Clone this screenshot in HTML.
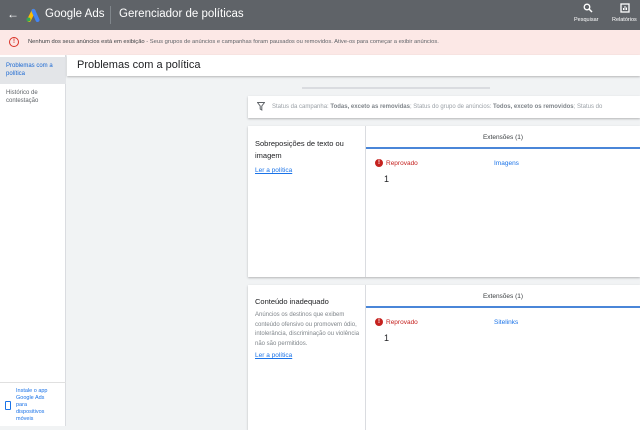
<!DOCTYPE html><html><head><meta charset="utf-8"><style>
*{box-sizing:border-box;margin:0;padding:0}
body{width:640px;height:426px;overflow:hidden;background:#f1f3f4;font-family:"Liberation Sans",sans-serif;position:relative;color:#202124}
.abs{position:absolute}
.hdr{left:0;top:0;width:640px;height:30px;background:#5f6368;color:#fff}
.alert{left:0;top:30px;width:640px;height:25px;background:#fce8e6;font-size:5.8px;color:#5f6368}
.side{left:0;top:55px;width:66px;height:371px;background:#fff;border-right:1px solid #dadce0}
.card{background:#fff;box-shadow:0 1px 2px rgba(0,0,0,.25)}
.red{color:#c5221f}.blue{color:#1a73e8}
</style></head><body>
<div class="abs hdr">
<div class="abs" style="left:7px;top:7px;font-size:12px">←</div>
<svg class="abs" style="left:25px;top:8px" width="15" height="14" viewBox="0 0 15 14"><path d="M4 12L8.5 3" stroke="#fbbc04" stroke-width="4" stroke-linecap="round"/><path d="M8.5 3l4 9" stroke="#4285f4" stroke-width="4" stroke-linecap="round"/><circle cx="3.5" cy="11.5" r="2" fill="#34a853"/></svg>
<div class="abs" style="left:45px;top:8px;font-size:11.5px">Google Ads</div>
<div class="abs" style="left:110px;top:6px;width:1px;height:18px;background:#80868b"></div>
<div class="abs" style="left:119px;top:8px;font-size:11.5px">Gerenciador de políticas</div>
<svg class="abs" style="left:583px;top:3px" width="10" height="10" viewBox="0 0 10 10"><circle cx="4" cy="4" r="2.8" stroke="#fff" stroke-width="1.3" fill="none"/><path d="M6 6l3 3" stroke="#fff" stroke-width="1.5"/></svg>
<div class="abs" style="left:574px;top:17px;font-size:5.5px">Pesquisar</div>
<svg class="abs" style="left:620px;top:3px" width="10" height="10" viewBox="0 0 10 10"><rect x="1" y="1" width="8" height="8" stroke="#fff" stroke-width="1.3" fill="none"/><path d="M3.5 7V5M5 7V3M6.5 7V4.5" stroke="#fff" stroke-width="1"/></svg>
<div class="abs" style="left:612px;top:17px;font-size:5.5px">Relatórios</div>
</div>
<div class="abs alert">
<div class="abs" style="left:9px;top:7px;width:10px;height:10px;border:1.3px solid #d93025;border-radius:50%;color:#d93025;font-size:6px;text-align:center;line-height:8px;font-weight:bold">!</div>
<div class="abs" style="left:28px;top:9px;white-space:nowrap"><b style="font-weight:normal;color:#3c4043">Nenhum dos seus anúncios está em exibição</b> - Seus grupos de anúncios e campanhas foram pausados ou removidos. Ative-os para começar a exibir anúncios.</div>
</div>
<div class="abs side">
<div class="abs" style="left:0;top:2px;width:66px;height:27px;background:#e3e5e8"></div>
<div class="abs blue" style="left:6px;top:7px;font-size:6px;line-height:8px;color:#1967d2">Problemas com a<br>política</div>
<div class="abs" style="left:6px;top:34px;font-size:6px;line-height:8px;color:#5f6368">Histórico de<br>contestação</div>
<div class="abs" style="left:0;top:327px;width:66px;height:1px;background:#e0e0e0"></div>
<div class="abs" style="left:5px;top:346px;width:6px;height:9px;border:1.3px solid #1a73e8;border-radius:1px"></div>
<div class="abs blue" style="left:16px;top:333px;font-size:5.5px;line-height:7px">Instale o app<br>Google Ads<br>para<br>dispositivos<br>móveis</div>
</div>
<div class="abs card" style="left:67px;top:55px;width:573px;height:21px"><div class="abs" style="left:10px;top:4px;font-size:11px">Problemas com a política</div></div>
<div class="abs" style="left:302px;top:87px;width:188px;height:2px;background:#dadce0"></div>
<div class="abs card" style="left:248px;top:96px;width:392px;height:22px;font-size:6px;color:#9aa0a6;white-space:nowrap">
<svg class="abs" style="left:9px;top:6px" width="8" height="9" viewBox="0 0 8 9"><path d="M0.5 0.5h7L4.8 4v4L3.2 7V4z" stroke="#5f6368" stroke-width="1" fill="none"/></svg>
<div class="abs" style="left:24px;top:8px">Status da campanha: <b style="color:#80868b">Todas, exceto as removidas</b>; Status do grupo de anúncios: <b style="color:#80868b">Todos, exceto os removidos</b>; Status do</div></div>
<div class="abs card" style="left:248px;top:126px;width:392px;height:151px">
<div class="abs" style="left:117px;top:0;width:1px;height:151px;background:#dadce0"></div>
<div class="abs" style="left:7px;top:12px;font-size:7.5px;line-height:12px;width:105px">Sobreposições de texto ou imagem</div>
<div class="abs blue" style="left:7px;top:41px;font-size:6.5px;text-decoration:underline">Ler a política</div>
<div class="abs" style="left:118px;top:8px;width:274px;text-align:center;font-size:6.5px;color:#3c4043">Extensões (1)</div>
<div class="abs" style="left:118px;top:21px;width:274px;height:1.5px;background:#4a86d8"></div>
<div class="abs" style="left:127px;top:33px;width:8px;height:8px;border-radius:50%;background:#c5221f;color:#fff;font-size:6px;text-align:center;line-height:8px;font-weight:bold">!</div>
<div class="abs red" style="left:138px;top:34px;font-size:6.5px">Reprovado</div>
<div class="abs blue" style="left:246px;top:34px;font-size:6.5px">Imagens</div>
<div class="abs" style="left:136px;top:48px;font-size:9px">1</div>
</div>
<div class="abs card" style="left:248px;top:285px;width:392px;height:145px">
<div class="abs" style="left:117px;top:0;width:1px;height:145px;background:#dadce0"></div>
<div class="abs" style="left:7px;top:12px;font-size:7.5px">Conteúdo inadequado</div>
<div class="abs" style="left:7px;top:26px;font-size:6px;line-height:9.5px;color:#80868b;width:108px">Anúncios os destinos que exibem conteúdo ofensivo ou promovem ódio, intolerância, discriminação ou violência não são permitidos.</div>
<div class="abs blue" style="left:7px;top:67px;font-size:6.5px;text-decoration:underline">Ler a política</div>
<div class="abs" style="left:118px;top:8px;width:274px;text-align:center;font-size:6.5px;color:#3c4043">Extensões (1)</div>
<div class="abs" style="left:118px;top:21px;width:274px;height:1.5px;background:#4a86d8"></div>
<div class="abs" style="left:127px;top:33px;width:8px;height:8px;border-radius:50%;background:#c5221f;color:#fff;font-size:6px;text-align:center;line-height:8px;font-weight:bold">!</div>
<div class="abs red" style="left:138px;top:34px;font-size:6.5px">Reprovado</div>
<div class="abs blue" style="left:246px;top:34px;font-size:6.5px">Sitelinks</div>
<div class="abs" style="left:136px;top:48px;font-size:9px">1</div>
</div>
</body></html>
